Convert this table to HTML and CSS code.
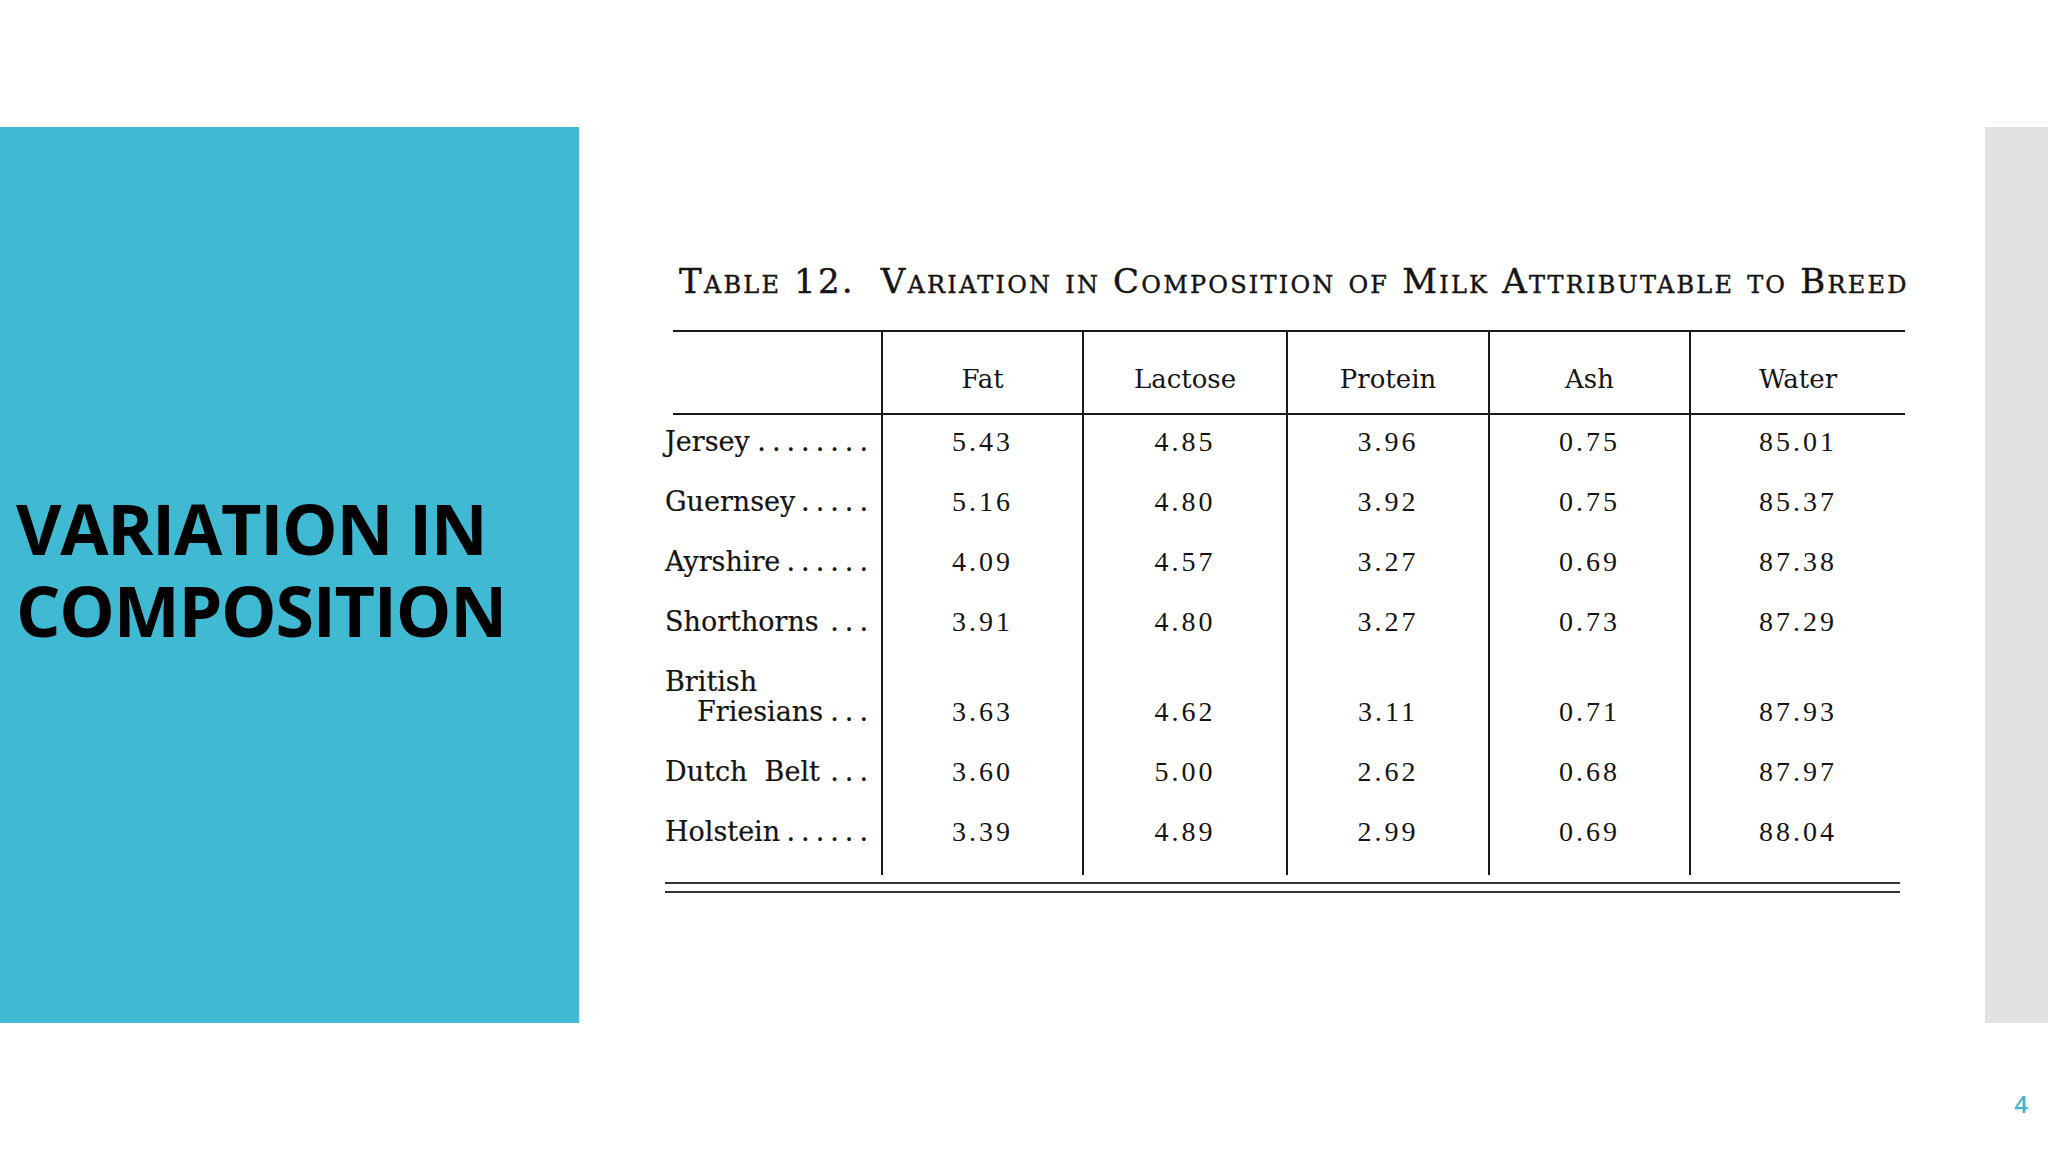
FILE: index.html
```html
<!DOCTYPE html>
<html>
<head>
<meta charset="utf-8">
<link rel="stylesheet" href="styles.css">
</head>
<body>
<div class="slide">
  <div class="top"></div>
  <div class="main">
    <div class="panel">
      <h1 class="title"><span class="tline">VARIATION IN</span><span class="tline">COMPOSITION</span></h1>
    </div>
    <div class="content">
      <div class="figure">
        <p class="caption">Table 12.&nbsp; Variation in Composition of Milk Attributable to Breed</p>
        <table class="milk">
          <colgroup>
            <col class="c-label"><col class="c-fat"><col class="c-lac"><col class="c-pro"><col class="c-ash"><col class="c-wat">
          </colgroup>
          <thead>
            <tr>
              <th class="lab"></th>
              <th>Fat</th>
              <th>Lactose</th>
              <th>Protein</th>
              <th>Ash</th>
              <th>Water</th>
            </tr>
          </thead>
          <tbody>
            <tr>
              <td class="lab"><div class="lab-in"><span class="name">Jersey</span><span class="dots">........</span></div></td>
              <td>5.43</td><td>4.85</td><td>3.96</td><td>0.75</td><td>85.01</td>
            </tr>
            <tr>
              <td class="lab"><div class="lab-in"><span class="name">Guernsey</span><span class="dots">.....</span></div></td>
              <td>5.16</td><td>4.80</td><td>3.92</td><td>0.75</td><td>85.37</td>
            </tr>
            <tr>
              <td class="lab"><div class="lab-in"><span class="name">Ayrshire</span><span class="dots">......</span></div></td>
              <td>4.09</td><td>4.57</td><td>3.27</td><td>0.69</td><td>87.38</td>
            </tr>
            <tr>
              <td class="lab"><div class="lab-in"><span class="name">Shorthorns</span><span class="dots">...</span></div></td>
              <td>3.91</td><td>4.80</td><td>3.27</td><td>0.73</td><td>87.29</td>
            </tr>
            <tr class="tall">
              <td class="lab"><div class="lab-in"><span class="first">British</span><span class="name indent">Friesians</span><span class="dots">...</span></div></td>
              <td>3.63</td><td>4.62</td><td>3.11</td><td>0.71</td><td>87.93</td>
            </tr>
            <tr>
              <td class="lab"><div class="lab-in"><span class="name">Dutch&nbsp; Belt</span><span class="dots">...</span></div></td>
              <td>3.60</td><td>5.00</td><td>2.62</td><td>0.68</td><td>87.97</td>
            </tr>
            <tr class="last">
              <td class="lab"><div class="lab-in"><span class="name">Holstein</span><span class="dots">......</span></div></td>
              <td>3.39</td><td>4.89</td><td>2.99</td><td>0.69</td><td>88.04</td>
            </tr>
          </tbody>
        </table>
        <div class="endrule"></div>
      </div>
    </div>
    <div class="strip"></div>
  </div>
  <div class="footer"><span class="num">4</span></div>
</div>
</body>
</html>
```

FILE: styles.css
```css
html, body {
  margin: 0;
  padding: 0;
  background: #ffffff;
}

.slide {
  width: 2048px;
  height: 1152px;
  display: flex;
  flex-direction: column;
  background: #ffffff;
}

.top {
  height: 127px;
  flex: none;
}

.main {
  height: 896px;
  flex: none;
  display: flex;
}

.panel {
  width: 579px;
  flex: none;
  background: #40b9d2;
  display: flex;
  flex-direction: column;
  justify-content: center;
  padding-left: 16px;
  padding-bottom: 12px;
  box-sizing: border-box;
}

.title {
  margin: 0;
  display: flex;
  flex-direction: column;
  gap: 6px;
  font-family: "Open Sans", "Noto Sans", sans-serif;
  font-weight: 700;
  font-size: 70px;
  line-height: 76px;
  letter-spacing: -1.3px;
  color: #000000;
}

.tline {
  display: block;
}

.content {
  flex: 1;
  display: flex;
}

.figure {
  padding-left: 86px;
  padding-top: 134px;
  color: #141414;
}

.caption {
  margin: 0 0 29px 14px;
  font-family: "DejaVu Serif", "Liberation Serif", serif;
  font-variant: small-caps;
  font-size: 34px;
  letter-spacing: 2.2px;
  line-height: 40px;
  white-space: nowrap;
  -webkit-text-stroke: 0.4px #141414;
}

.milk {
  width: 1232px;
  margin-left: 8px;
  table-layout: fixed;
  border-collapse: separate;
  border-spacing: 0;
  border-top: 2px solid #1a1a1a;
}

.c-label { width: 208px; }
.c-fat { width: 201px; }
.c-lac { width: 204px; }
.c-pro { width: 202px; }
.c-ash { width: 201px; }
.c-wat { width: 216px; }

.milk th {
  font-family: "DejaVu Serif", "Liberation Serif", serif;
  font-weight: 400;
  font-size: 26px;
  line-height: 30px;
  padding: 32px 0 19px;
  text-align: center;
  border-bottom: 2px solid #1a1a1a;
  border-left: 2px solid #1a1a1a;
}

.milk th.lab {
  border-left: none;
}

.milk td {
  font-family: "Liberation Serif", "DejaVu Serif", serif;
  font-size: 28px;
  letter-spacing: 3px;
  line-height: 30px;
  padding: 12px 0 18px;
  text-align: center;
  vertical-align: bottom;
  border-left: 2px solid #1a1a1a;
}

.milk td.lab {
  border-left: none;
  padding-right: 13px;
}

.lab-in {
  margin-left: -8px;
  display: flex;
  flex-wrap: wrap;
  justify-content: space-between;
  align-items: baseline;
  text-align: left;
  letter-spacing: 0;
  font-family: "DejaVu Serif", "Liberation Serif", serif;
  font-size: 27px;
  -webkit-text-stroke: 0.2px #141414;
}

.lab-in .first {
  width: 100%;
}

.lab-in .name {
  flex: none;
}

.lab-in .indent {
  padding-left: 32px;
}

.lab-in .dots {
  flex: none;
  letter-spacing: 6px;
  margin-right: -6px;
  white-space: nowrap;
}

.milk tr.last td {
  padding-bottom: 28px;
}

.endrule {
  width: 1235px;
  margin-top: 7px;
  height: 7px;
  border-top: 2px solid #333333;
  border-bottom: 2px solid #333333;
}

.strip {
  width: 63px;
  flex: none;
  background: #e1e1e1;
}

.footer {
  flex: 1;
  display: flex;
  justify-content: flex-end;
  align-items: flex-start;
  padding: 64px 20px 0 0;
}

.num {
  font-family: "Open Sans", "Noto Sans", sans-serif;
  font-size: 24px;
  font-weight: 600;
  color: #3fb8cf;
}
```
